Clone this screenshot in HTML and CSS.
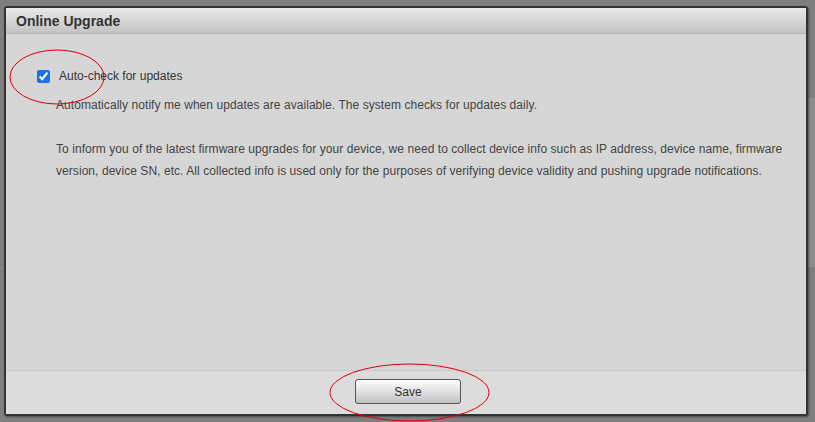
FILE: index.html
```html
<!DOCTYPE html>
<html lang="en">
<head>
    <meta charset="UTF-8">
    <meta name="viewport" content="width=device-width, initial-scale=1.0">
    <title>Online Upgrade</title>
    <link rel="stylesheet" href="styles.css">
</head>
<body>
    <div class="dialog">
        <div class="dialog-header">Online Upgrade</div>
        <div class="dialog-body">
            <div class="check-row">
                <input type="checkbox" id="autoCheck" checked>
                <label for="autoCheck">Auto-check for updates</label>
            </div>
            <p class="description">
                Automatically notify me when updates are available. The system checks for updates daily.<br><br>
                To inform you of the latest firmware upgrades for your device, we need to collect device info such as IP address, device name, firmware version, device SN, etc. All collected info is used only for the purposes of verifying device validity and pushing upgrade notifications.
            </p>
        </div>
        <div class="dialog-footer">
            <button type="button" class="btn-save">Save</button>
        </div>
    </div>

    <svg class="annotations" width="815" height="422" viewBox="0 0 815 422">
        <ellipse cx="57" cy="77" rx="47" ry="27" />
        <ellipse cx="409.5" cy="392.5" rx="79.5" ry="28.5" />
    </svg>
</body>
</html>
```

FILE: styles.css
```css
:root {
    --backdrop: #7f7f7f;
    --panel: #d6d6d6;
    --footer: #dcdcdc;
    --text-color: #3c3c3c;
}

body, html {
    margin: 0;
    height: 100%;
    overflow: hidden;
    font-family: "Liberation Sans", Arial, sans-serif;
    color: var(--text-color);
}

body {
    padding: 6px 0 0 4px;
    box-sizing: border-box;
    background:
        linear-gradient(#8d8d8d, #8d8d8d) right 0 top 98px / 7px 169px no-repeat,
        linear-gradient(#8a8a8a, #8a8a8a) 0 267px / 4px 1px no-repeat,
        var(--backdrop);
}

.dialog {
    width: 804px;
    height: 410px;
    box-sizing: border-box;
    border: 2px solid #333;
    border-radius: 3px;
    box-shadow: 1px 1px 2px rgba(0, 0, 0, 0.4);
    background-color: var(--panel);
    display: flex;
    flex-direction: column;
}

.dialog-header {
    height: 26px;
    box-sizing: border-box;
    padding: 5px 0 0 10px;
    font-size: 14px;
    font-weight: bold;
    color: #333;
    background: linear-gradient(#e9e9e9, #c3c3c3);
    border-bottom: 1px solid #b4b4b4;
}

.dialog-body {
    flex: 1;
    padding-top: 31px;
}

.check-row {
    display: flex;
    align-items: center;
    height: 22px;
    padding-left: 31px;
}

.check-row input {
    width: 13px;
    height: 13px;
    margin: 0 9px 0 0;
    accent-color: #1a73e8;
}

.check-row label {
    font-size: 12px;
    color: #333;
}

.description {
    margin: 7px 0 0;
    padding: 0 20px 0 50px;
    font-size: 12px;
    line-height: 22px;
    letter-spacing: 0.06px;
    color: #444;
}

.dialog-footer {
    height: 44px;
    box-sizing: border-box;
    border-top: 1px solid #c9c9c9;
    background-color: var(--footer);
    display: flex;
    justify-content: center;
    padding-top: 8px;
}

.btn-save {
    width: 106px;
    height: 25px;
    margin-left: 4px;
    border: 1px solid #555;
    border-radius: 3px;
    background: linear-gradient(#ffffff, #c2c2c2);
    font-family: "Liberation Sans", Arial, sans-serif;
    font-size: 12px;
    color: #333;
    cursor: pointer;
}

.annotations {
    position: absolute;
    top: 0;
    left: 0;
    pointer-events: none;
}

.annotations ellipse {
    fill: none;
    stroke: #e00000;
    stroke-width: 1;
}
```
